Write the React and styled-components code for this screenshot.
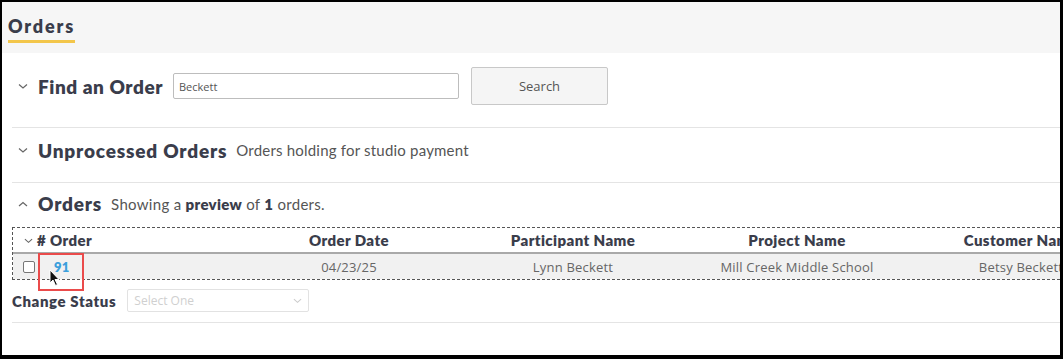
import React from "react";
import styled, { createGlobalStyle } from "styled-components";

const Global = createGlobalStyle`
  html, body { margin: 0; padding: 0; background: #000; }
  body { font-family: Lato, "Open Sans", sans-serif; }
`;

const Frame = styled.div`
  margin: 2px 3px 0 2px;
  height: 353px;
  background: #fff;
  overflow: hidden;
  position: relative;
`;

const Header = styled.header`
  background: #f6f6f6;
  height: 51px;
  padding: 13px 0 0 6px;
  box-sizing: border-box;
`;

const PageTitle = styled.h1`
  display: inline-block;
  margin: 0;
  font-size: 18px;
  font-weight: 800;
  letter-spacing: 1.8px;
  color: #3a3d4b;
  line-height: 23px;
  padding-bottom: 2px;
  border-bottom: 3px solid #f3c64a;
`;

const Content = styled.main`
  padding-left: 10px;
`;

const Section = styled.section`
  display: flex;
  align-items: center;
  gap: 10px;
  width: 1048px;
  height: ${(p) => p.$h}px;
  padding-top: ${(p) => p.$pt || 0}px;
  padding-bottom: ${(p) => p.$pb || 0}px;
  box-sizing: border-box;
  border-bottom: ${(p) => (p.$divider ? "1px solid #e4e4e4" : "none")};
`;

const Chevron = styled.svg`
  width: 10px;
  height: 10px;
  margin-left: 6px;
  flex: none;
`;

const SectionTitle = styled.h2`
  margin: 0;
  font-size: 19px;
  font-weight: 800;
  letter-spacing: ${(p) => p.$ls || 0.8}px;
  color: #3a3d4b;
  white-space: nowrap;
`;

const SubText = styled.span`
  font-size: 15px;
  letter-spacing: ${(p) => p.$ls || 0.2}px;
  color: #555;
  margin-left: -1px;
  white-space: nowrap;
  b { font-weight: 800; color: #3a3d4b; }
`;

const SearchInput = styled.input`
  width: 286px;
  height: 26px;
  box-sizing: border-box;
  border: 1px solid #bdbdbd;
  border-radius: 2px;
  font-family: "Open Sans", sans-serif;
  font-size: 11px;
  color: #555;
  padding: 0 5px;
  outline: none;
`;

const SearchButton = styled.button`
  width: 137px;
  height: 38px;
  margin-left: 2px;
  background: #f5f5f5;
  border: 1px solid #c8c8c8;
  border-radius: 2px;
  font-family: "Open Sans", sans-serif;
  font-size: 13px;
  color: #555;
`;

const TableWrap = styled.div`
  width: 1131px;
  border: 1px dashed #555;
  margin-top: 1px;
`;

const Row = styled.div`
  display: grid;
  grid-template-columns: 224px repeat(4, 224px);
  align-items: center;
  height: ${(p) => p.$h}px;
  background: ${(p) => p.$bg || "transparent"};
  border-bottom: ${(p) => (p.$line ? "2px solid #a9a9a9" : "none")};
`;

const HeadCell = styled.div`
  font-size: 15px;
  font-weight: 800;
  letter-spacing: 0.4px;
  color: #3a3d4b;
  display: flex;
  align-items: center;
  justify-content: ${(p) => (p.$left ? "flex-start" : "center")};
  gap: 4px;
  white-space: nowrap;
  padding-left: ${(p) => (p.$left ? "11px" : "0")};
`;

const Cell = styled.div`
  font-family: "Open Sans", sans-serif;
  font-size: 13px;
  letter-spacing: 0.2px;
  color: #666;
  white-space: nowrap;
  display: flex;
  align-items: center;
  justify-content: ${(p) => (p.$left ? "flex-start" : "center")};
  padding-left: ${(p) => (p.$left ? "10px" : "0")};
  position: relative;
`;

const Check = styled.span`
  width: 12px;
  height: 12px;
  border: 1px solid #777;
  border-radius: 2px;
  background: #fff;
  box-sizing: border-box;
  flex: none;
`;

const OrderLink = styled.a`
  color: #3b9fdc;
  font-family: Lato, sans-serif;
  font-weight: 800;
  font-size: 13px;
  letter-spacing: 0.3px;
  margin-left: 19px;
  text-decoration: none;
`;

const Highlight = styled.span`
  position: absolute;
  left: 25px;
  top: -6px;
  width: 46px;
  height: 38px;
  border: 2px solid #ea4b4b;
  box-sizing: border-box;
  pointer-events: none;
`;

const Cursor = styled.svg`
  position: absolute;
  left: 36px;
  top: 10px;
  width: 12px;
  height: 18px;
`;

const StatusRow = styled.div`
  display: flex;
  align-items: center;
  gap: 11px;
  height: 43px;
  padding-bottom: 1px;
  box-sizing: border-box;
  border-bottom: 1px solid #e4e4e4;
  width: 1048px;
`;

const StatusLabel = styled.span`
  font-size: 15px;
  font-weight: 800;
  letter-spacing: 0.6px;
  color: #3a3d4b;
`;

const Select = styled.div`
  width: 182px;
  height: 23px;
  box-sizing: border-box;
  border: 1px solid #e2e2e2;
  border-radius: 2px;
  display: flex;
  align-items: center;
  justify-content: space-between;
  padding: 0 6px;
  font-family: "Open Sans", sans-serif;
  font-size: 12px;
  color: #d0d0d0;
`;

const Down = ({ color = "#666" }) => (
  <Chevron viewBox="0 0 10 10">
    <polyline points="1,3.5 5,7 9,3.5" fill="none" stroke={color} strokeWidth="1.2" />
  </Chevron>
);
const Up = () => (
  <Chevron viewBox="0 0 10 10">
    <polyline points="1,7 5,3.5 9,7" fill="none" stroke="#666" strokeWidth="1.2" />
  </Chevron>
);

export default function App() {
  return (
    <>
      <Global />
      <Frame>
        <Header>
          <PageTitle>Orders</PageTitle>
        </Header>
        <Content>
          <Section $h={75} $pb={8} $divider>
            <Down />
            <SectionTitle $ls={0.55}>Find an Order</SectionTitle>
            <SearchInput defaultValue="Beckett" />
            <SearchButton>Search</SearchButton>
          </Section>
          <Section $h={55} $pb={10} $divider>
            <Down />
            <SectionTitle>Unprocessed Orders</SectionTitle>
            <SubText>Orders holding for studio payment</SubText>
          </Section>
          <Section $h={43} $pb={2}>
            <Up />
            <SectionTitle>Orders</SectionTitle>
            <SubText $ls={0.3}>
              Showing a <b>preview</b> of <b>1</b> orders.
            </SubText>
          </Section>
          <TableWrap>
            <Row $h={24} $line>
              <HeadCell $left>
                <svg width="9" height="9" viewBox="0 0 10 10">
                  <polyline points="1,3.5 5,7 9,3.5" fill="none" stroke="#666" strokeWidth="1.2" />
                </svg>
                # Order
              </HeadCell>
              <HeadCell>Order Date</HeadCell>
              <HeadCell>Participant Name</HeadCell>
              <HeadCell>Project Name</HeadCell>
              <HeadCell>Customer Name</HeadCell>
            </Row>
            <Row $h={25} $bg="#f1f1f1">
              <Cell $left>
                <Check />
                <OrderLink>91</OrderLink>
                <Highlight />
                <Cursor viewBox="0 0 12 18">
                  <path d="M1 1 L1 14 L4 11 L6.5 16.5 L8.5 15.5 L6 10.5 L10 10.5 Z" fill="#111" stroke="#fff" strokeWidth="1" />
                </Cursor>
              </Cell>
              <Cell>04/23/25</Cell>
              <Cell>Lynn Beckett</Cell>
              <Cell>Mill Creek Middle School</Cell>
              <Cell>Betsy Beckett</Cell>
            </Row>
          </TableWrap>
          <StatusRow>
            <StatusLabel>Change Status</StatusLabel>
            <Select>
              Select One
              <svg width="9" height="9" viewBox="0 0 10 10">
                <polyline points="1,3.5 5,7 9,3.5" fill="none" stroke="#ccc" strokeWidth="1.2" />
              </svg>
            </Select>
          </StatusRow>
        </Content>
      </Frame>
    </>
  );
}
